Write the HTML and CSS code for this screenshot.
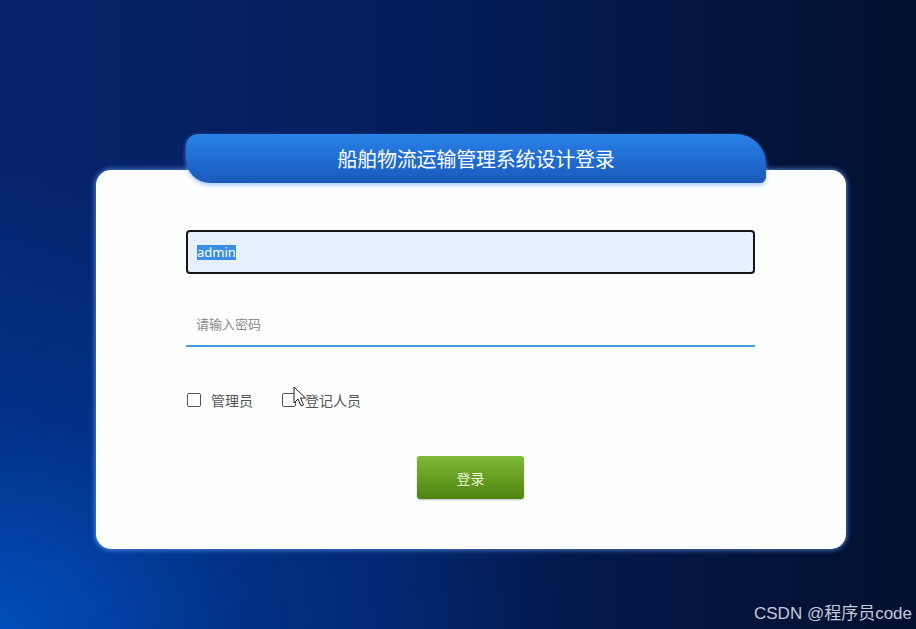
FILE: index.html
```html
<!DOCTYPE html>
<html lang="zh-CN">
<head>
<meta charset="utf-8">
<title>船舶物流运输管理系统设计登录</title>
<link rel="stylesheet" href="styles.css">
</head>
<body>
<div class="page">
  <div class="login">
    <div class="tab">船舶物流运输管理系统设计登录</div>
    <div class="card">
      <div class="field filled"><span class="sel">admin</span></div>
      <div class="field pwd"><span class="ph">请输入密码</span></div>
      <div class="roles">
        <label class="role"><span class="box"></span><span>管理员</span></label>
        <label class="role second"><span class="box"></span><span>登记人员</span></label>
      </div>
      <div class="actions"><button class="btn">登录</button></div>
    </div>
  </div>
  <svg class="cursor" width="14" height="22" viewBox="0 0 14 22"><path d="M1 1 L1 17 L5 13 L8 20 L10.5 19 L7.5 12 L12.5 12 Z" fill="#fff" stroke="#222" stroke-width="1"/></svg>
  <div class="mark">CSDN @程序员code</div>
</div>
</body>
</html>
```
FILE: styles.css
```css
html, body {
  margin: 0;
  padding: 0;
}
body {
  font-family: "Noto Sans CJK SC", "Noto Sans", sans-serif;
}
.page {
  position: relative;
  width: 916px;
  height: 629px;
  box-sizing: border-box;
  padding: 134px 0 0 96px;
  overflow: hidden;
  background:
    radial-gradient(ellipse 560px 460px at 0% 100%, rgba(0, 80, 190, 0.95) 0%, rgba(0, 60, 160, 0.55) 45%, rgba(0, 40, 120, 0) 100%),
    linear-gradient(90deg, #06246c 0%, #041e5c 45%, #03143c 80%, #020f30 100%);
}
.login {
  width: 750px;
  display: flex;
  flex-direction: column;
}
.tab {
  position: relative;
  z-index: 2;
  margin-left: 90px;
  width: 580px;
  height: 49px;
  box-sizing: border-box;
  display: flex;
  align-items: center;
  justify-content: center;
  padding-bottom: 1px;
  color: #fff;
  font-size: 20px;
  letter-spacing: -0.2px;
  border-radius: 12px 30px 6px 24px;
  background: linear-gradient(180deg, #2b82e6 0%, #1f6bd3 55%, #1a5ab8 100%);
  box-shadow: 0 2px 4px rgba(120, 170, 255, 0.7);
}
.card {
  margin-top: -13px;
  height: 379px;
  box-sizing: border-box;
  padding: 60px 91px 0 90px;
  background: #fdfefe;
  border-radius: 15px;
  box-shadow: 0 0 5px 1px rgba(110, 170, 255, 0.7);
  display: flex;
  flex-direction: column;
}
.field {
  height: 44px;
  box-sizing: border-box;
  display: flex;
  align-items: center;
  padding-left: 9px;
  font-size: 13px;
  font-family: "Noto Sans", "Noto Sans CJK SC", sans-serif;
}
.filled {
  background: #e6effd;
  border: 2px solid #161616;
  border-radius: 4px;
}
.sel {
  background: #3a8ee6;
  color: #fff;
  line-height: 15px;
}
.pwd {
  margin-top: 29px;
  border-bottom: 2px solid #4a9ade;
  padding-left: 10px;
  padding-bottom: 2px;
}
.ph {
  color: #8a8a8a;
  font-family: "Noto Sans CJK SC", sans-serif;
}
.roles {
  margin-top: 44px;
  height: 18px;
  display: flex;
  align-items: center;
  font-size: 14px;
  color: #555;
}
.role {
  display: flex;
  align-items: center;
  gap: 10px;
  margin-left: 1px;
}
.role.second {
  margin-left: 29px;
  gap: 9px;
}
.box {
  width: 12px;
  height: 12px;
  border: 1px solid #555;
  border-radius: 2px;
  background: #fff;
}
.actions {
  margin-top: 47px;
  display: flex;
  justify-content: center;
}
.btn {
  width: 107px;
  height: 43px;
  border: none;
  border-radius: 3px;
  color: #eef8dc;
  font-size: 14px;
  font-family: "Noto Sans CJK SC", sans-serif;
  background: linear-gradient(180deg, #7fba38 0%, #679f22 50%, #4d8410 100%);
  box-shadow: 0 1px 2px rgba(0, 0, 0, 0.25);
}
.cursor {
  position: absolute;
  left: 293px;
  top: 386px;
}
.mark {
  position: absolute;
  right: 4px;
  bottom: 5px;
  color: #c4cad8;
  font-size: 17px;
  font-family: "Liberation Sans", "Noto Sans CJK SC", sans-serif;
}
```
